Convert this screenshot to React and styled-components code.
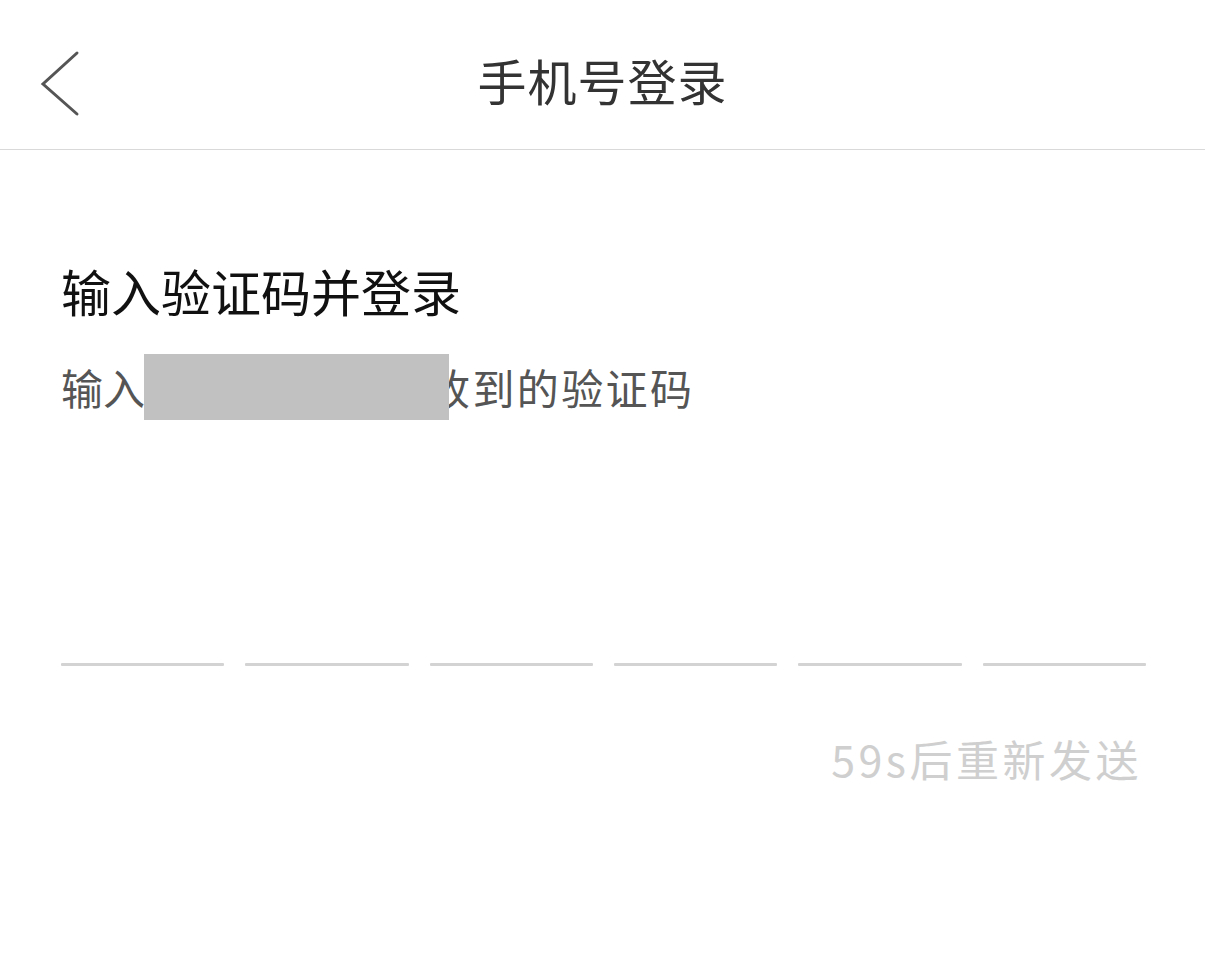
import React from 'react'
import styled, { createGlobalStyle } from 'styled-components'

const GlobalStyle = createGlobalStyle`
  html, body {
    margin: 0;
    padding: 0;
    background: #fff;
    font-family: "Noto Sans CJK SC", "Noto Sans", sans-serif;
  }
`

const Page = styled.div`
  width: 1205px;
  min-height: 967px;
  background: #fff;
`

const Header = styled.div`
  position: relative;
  height: 149px;
  border-bottom: 1px solid #d9d9d9;
  display: flex;
  align-items: center;
  justify-content: center;
`

const BackButton = styled.button`
  position: absolute;
  left: 38px;
  top: 48px;
  width: 46px;
  height: 72px;
  padding: 0;
  border: none;
  background: none;
  svg {
    display: block;
  }
`

const Title = styled.h1`
  margin: 0;
  margin-top: 10px;
  font-size: 49px;
  font-weight: 400;
  color: #333;
  letter-spacing: 1px;
`

const Body = styled.div`
  padding: 110px 59px 0 61px;
`

const Heading = styled.h2`
  margin: 0;
  font-size: 50px;
  line-height: 60px;
  font-weight: 400;
  color: #111;
`

const Sub = styled.p`
  margin: 34px 0 0;
  font-size: 42px;
  line-height: 66px;
  color: #555;
  white-space: nowrap;
`

const Spaced = styled.span`
  letter-spacing: 2.4px;
`

const Redacted = styled.span`
  position: relative;
  display: inline-block;
  vertical-align: top;
  width: 283px;
  height: 66px;
  &::after {
    content: '';
    position: absolute;
    left: -1px;
    top: 0;
    width: 305px;
    height: 66px;
    background: #c1c1c1;
    z-index: 1;
  }
`

const CodeRow = styled.div`
  margin-top: 243px;
  display: grid;
  grid-template-columns: repeat(6, 1fr);
  gap: 21px;
`

const CodeSlot = styled.div`
  height: 3px;
  border-radius: 1px;
  background: ${p => (p.$active ? '#999' : '#d3d3d3')};
`

const Resend = styled.div`
  margin-top: 62px;
  padding-right: 4px;
  text-align: right;
  font-size: 43px;
  line-height: 60px;
  letter-spacing: 3.5px;
  color: #cfcfcf;
`

export default function App() {
  return (
    <Page>
      <GlobalStyle />
      <Header>
        <BackButton aria-label="返回">
          <svg width="46" height="72" viewBox="0 0 46 72">
            <polyline
              points="39,5 5,36 39,66"
              fill="none"
              stroke="#555"
              strokeWidth="3"
              strokeLinecap="round"
              strokeLinejoin="miter"
            />
          </svg>
        </BackButton>
        <Title>手机号登录</Title>
      </Header>
      <Body>
        <Heading>输入验证码并登录</Heading>
        <Sub>
          输入<Redacted /><Spaced>收到的验证码</Spaced>
        </Sub>
        <CodeRow>
          {[0, 1, 2, 3, 4, 5].map(i => (
            <CodeSlot key={i} />
          ))}
        </CodeRow>
        <Resend>59s后重新发送</Resend>
      </Body>
    </Page>
  )
}
